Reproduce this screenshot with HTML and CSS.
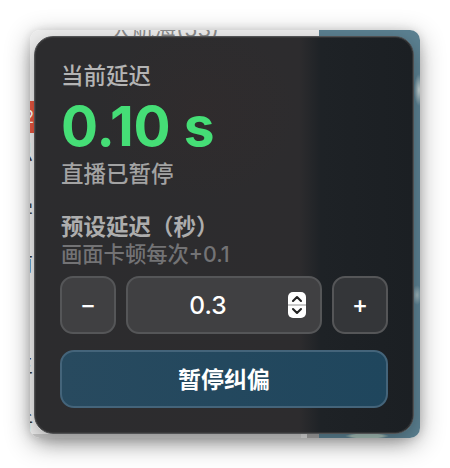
FILE: index.html
```html
<!DOCTYPE html>
<html lang="zh-CN">
<head>
<meta charset="utf-8">
<title>延迟控制</title>
<link rel="stylesheet" href="styles.css">
</head>
<body>
<div class="window">
  <div class="page">
    <div class="page-left">
      <div class="page-title">大航海(53)</div>
      <div class="badge-row"><span class="badge">2</span></div>
      <div class="frag frag-a">思</div>
      <div class="frag frag-b">学</div>
      <div class="frag frag-c">前</div>
      <div class="frag frag-d">主</div>
      <div class="frag frag-e">新</div>
      <div class="bottom-strip"><i></i><i></i></div>
    </div>
    <div class="page-right"></div>
  </div>
  <section class="panel">
    <div class="label">当前延迟</div>
    <div class="value">0.10 s</div>
    <div class="label status">直播已暂停</div>
    <div class="label preset">预设延迟（秒）</div>
    <div class="hint">画面卡顿每次+0.1</div>
    <div class="stepper">
      <button class="step" type="button">−</button>
      <div class="field">
        <span class="field-value">0.3</span>
        <span class="spin">
          <svg viewBox="0 0 18 26" width="18" height="26" aria-hidden="true">
            <rect width="18" height="26" rx="5" fill="#fff"/>
            <rect y="12" width="18" height="2" fill="#c9c9c9"/>
            <path d="M5 9 L9 5 L13 9" fill="none" stroke="#222" stroke-width="2.1" stroke-linecap="round" stroke-linejoin="round"/>
            <path d="M5 17 L9 21 L13 17" fill="none" stroke="#222" stroke-width="2.1" stroke-linecap="round" stroke-linejoin="round"/>
          </svg>
        </span>
      </div>
      <button class="step" type="button">+</button>
    </div>
    <button class="pause" type="button">暂停纠偏</button>
  </section>
</div>
</body>
</html>
```
FILE: styles.css
```css
* { box-sizing: border-box; }
html, body { margin: 0; height: 100%; background: #fff; overflow: hidden; }
body {
  padding: 30px 0 0 30px;
  font-family: Inter, "Noto Sans CJK SC", "Liberation Sans", sans-serif;
}
.window {
  position: relative;
  width: 390px;
  height: 408px;
  border-radius: 10px;
  box-shadow: 0 6px 26px rgba(0, 0, 0, .30), 0 0 10px rgba(0, 0, 0, .10);
}
.page {
  display: flex;
  height: 100%;
  border-radius: 10px;
  overflow: hidden;
}
.page-left {
  width: 289px;
  background: #ececec;
  overflow: hidden;
  display: flex;
  flex-direction: column;
  color: #333;
  font-size: 22px;
  line-height: 22px;
}
.page-title {
  margin: -12px 0 0 80px;
  height: 22px;
  white-space: nowrap;
  color: #8b8b8b;
  font-size: 22px;
}
.badge-row { margin-top: 61px; height: 32px; }
.badge {
  display: block;
  width: 24px;
  margin-left: -20px;
  height: 32px;
  background: #e2553f;
  color: #fff;
  text-align: right;
  font-size: 17px;
  line-height: 32px;
  overflow: hidden;
}
.frag { margin-left: -19px; width: 23px; overflow: hidden; white-space: nowrap; }
.frag-a { margin-top: 8px; }
.frag-b { margin-top: 37px; color: #444; }
.frag-c { margin-top: 31px; }
.frag-d { margin-top: 80px; }
.frag-e { margin-top: 38px; }
.bottom-strip {
  margin-top: auto;
  display: flex;
  justify-content: flex-end;
  height: 4px;
  background: #c8c8c8;
}
.bottom-strip i { display: block; height: 4px; background: #d8d8d8; width: 6px; }
.bottom-strip i:last-child { width: 12px; background: #a2a2a2; }
.page-right {
  flex: 1;
  background:
    radial-gradient(ellipse 22px 3px at 48px 406px, #a4bdb6 70%, transparent 100%),
    radial-gradient(ellipse 5px 16px at 100px 60px, #c8d4d4, transparent 100%),
    radial-gradient(ellipse 5px 10px at 98px 265px, #9fb5ba, transparent 100%),
    #5b8091;
}
.panel {
  position: absolute;
  left: 4px;
  top: 6px;
  width: 380px;
  height: 398px;
  display: flex;
  flex-direction: column;
  padding: 0 25px;
  border: 1px solid #505153;
  border-radius: 19px;
  box-shadow: inset 0 0 0 1px rgba(70, 70, 72, .45), 0 6px 18px rgba(0, 0, 0, .28);
  background:
    radial-gradient(ellipse 100px 90px at 165px 75px, rgba(70, 40, 36, .12), transparent 100%),
    linear-gradient(90deg, #2c2c2e 0, #2d2c2e 264px, #1e2226 286px, #1b1f23 100%);
  color: #fff;
}
.label {
  margin-top: 24px;
  height: 30px;
  padding-left: 1px;
  font-size: 22.5px;
  line-height: 30px;
  font-weight: 500;
  color: #b4b4b4;
}
.value {
  margin-top: 4px;
  height: 62px;
  padding-left: 1px;
  font-size: 55px;
  line-height: 62px;
  font-weight: 700;
  color: #45de76;
  white-space: nowrap;
}
.label.status { margin-top: 2px; color: #a3a3a3; }
.label.preset { margin-top: 23px; height: 29px; color: #adadad; font-weight: 700; }
.hint {
  height: 26px;
  padding-left: 1px;
  font-size: 21.3px;
  line-height: 26px;
  font-weight: 500;
  color: #737375;
  white-space: nowrap;
}
.stepper {
  display: flex;
  gap: 10px;
  margin-top: 9px;
  height: 58px;
}
.step, .field {
  border: 2px solid #555658;
  border-radius: 13px;
  background: #404042;
  color: #fff;
}
.step {
  width: 56px;
  padding: 0;
  font: 500 24px/1 Inter, "Liberation Sans", sans-serif;
}
.stepper .step:last-child { background: #343639; }
.field {
  flex: 1;
  display: flex;
  align-items: center;
  padding-right: 14px;
}
.field-value {
  flex: 1;
  text-align: center;
  font-size: 24.5px;
  font-weight: 500;
}
.spin { display: flex; }
.pause {
  margin-top: 16px;
  height: 58px;
  padding: 0 0 2px;
  border: 2px solid #44647a;
  border-radius: 14px;
  background: linear-gradient(90deg, #284a5f, #1f465d);
  color: #fff;
  font: 700 23px/1 "Noto Sans CJK SC", sans-serif;
}
```
